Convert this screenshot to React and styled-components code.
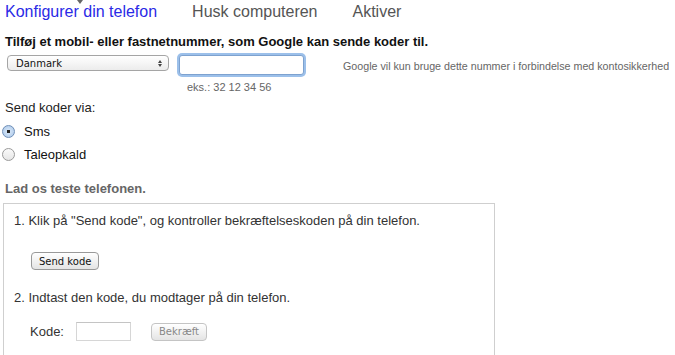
import React from "react";
import styled, { createGlobalStyle } from "styled-components";

const Global = createGlobalStyle`
  html, body {
    margin: 0;
    background: #fff;
    overflow: hidden;
  }
  body {
    font-family: "Liberation Sans", Arial, sans-serif;
    color: #222;
  }
`;

const Page = styled.div`
  padding: 0 5px;
  width: 675px;
  height: 355px;
  box-sizing: border-box;
  overflow: hidden;
`;

const Tabs = styled.div`
  position: relative;
  display: flex;
  gap: 35px;
  height: 24px;
  align-items: center;
  font-size: 16px;
`;

const Tab = styled.span`
  color: ${(p) => (p.$active ? "#2a2ae6" : "#555")};
  white-space: nowrap;
`;

const Pointer = styled.span`
  position: absolute;
  left: 72px;
  top: 0;
  width: 0;
  height: 0;
  border-left: 3px solid transparent;
  border-right: 3px solid transparent;
  border-top: 4px solid #666;
`;

const Heading = styled.div`
  margin-top: 10px;
  font-size: 13px;
  font-weight: bold;
  color: #111;
  white-space: nowrap;
`;

const PhoneRow = styled.div`
  display: flex;
  align-items: flex-start;
  margin-top: 6px;
  white-space: nowrap;
`;

const Select = styled.div`
  flex-shrink: 0;
  margin-left: 2px;
  width: 162px;
  height: 16px;
  box-sizing: border-box;
  border: 1px solid #a5a5a5;
  border-radius: 4px;
  background: linear-gradient(#fff, #ececec);
  display: flex;
  align-items: center;
  justify-content: space-between;
  padding: 0 6px 0 8px;
  font-family: "DejaVu Sans", sans-serif;
  font-size: 10px;
  color: #111;
`;

const Arrows = styled.span`
  display: flex;
  flex-direction: column;
  gap: 1px;
`;

const Tri = styled.span`
  width: 0;
  height: 0;
  border-left: 2px solid transparent;
  border-right: 2px solid transparent;
  ${(p) => (p.$up ? "border-bottom: 3px solid #444;" : "border-top: 3px solid #444;")}
`;

const NumberCol = styled.div`
  flex-shrink: 0;
  margin-left: 10px;
  display: flex;
  flex-direction: column;
`;

const NumberInput = styled.div`
  width: 125px;
  height: 20px;
  box-sizing: border-box;
  border: 1px solid #7ea2cf;
  border-radius: 3px;
  box-shadow: 0 0 0 2px #9cc0ea;
  background: #fff;
`;

const Example = styled.div`
  margin: 6px 0 0 8px;
  font-size: 11px;
  color: #666;
`;

const Note = styled.div`
  flex-shrink: 0;
  margin: 5px 0 0 39px;
  font-size: 10.7px;
  color: #666;
`;

const Label = styled.div`
  margin-top: 7px;
  font-size: 13px;
  color: #222;
`;

const RadioRow = styled.label`
  display: flex;
  align-items: center;
  gap: 9px;
  margin-top: ${(p) => p.$top}px;
  margin-left: -3px;
  font-size: 13px;
  color: #111;
`;

const Radio = styled.span`
  width: 13px;
  height: 13px;
  box-sizing: border-box;
  border-radius: 50%;
  border: 1px solid ${(p) => (p.$on ? "#6f8fb8" : "#9a9a9a")};
  background: ${(p) =>
    p.$on ? "radial-gradient(circle, #222 0 1.6px, #cfe1f5 2px, #a9c6e8)" : "linear-gradient(#fafafa, #e6e6e6)"};
`;

const SubHeading = styled.div`
  margin-top: 19px;
  font-size: 13px;
  font-weight: bold;
  color: #666;
`;

const Box = styled.div`
  margin: 7px 0 0 -2px;
  width: 492px;
  height: 170px;
  box-sizing: border-box;
  border: 1px solid #cfcfcf;
  padding: 9px 10px;
`;

const Step = styled.div`
  font-size: 13px;
  color: #333;
  margin-top: ${(p) => p.$top || 0}px;
`;

const Button = styled.button`
  display: block;
  font-family: "DejaVu Sans", sans-serif;
  font-size: 10px;
  padding: 0 7px;
  height: 18px;
  border: 1px solid ${(p) => (p.disabled ? "#c4c4c4" : "#999")};
  border-radius: 4px;
  background: linear-gradient(#fff, #e4e4e4);
  color: ${(p) => (p.disabled ? "#888" : "#111")};
`;

const SendWrap = styled.div`
  margin: 24px 0 0 17px;
`;

const CodeRow = styled.div`
  display: flex;
  align-items: center;
  margin: 17px 0 0 16px;
  font-size: 13px;
  color: #333;
`;

const CodeInput = styled.div`
  margin-left: 12px;
  width: 55px;
  height: 19px;
  box-sizing: border-box;
  border: 1px solid #d6d6d6;
  border-top-color: #c4c4c4;
`;

const ConfirmWrap = styled.div`
  margin-left: 20px;
`;

export default function App() {
  return (
    <Page>
      <Global />
      <Tabs>
        <Pointer />
        <Tab $active>Konfigurer din telefon</Tab>
        <Tab>Husk computeren</Tab>
        <Tab>Aktiver</Tab>
      </Tabs>
      <Heading>Tilføj et mobil- eller fastnetnummer, som Google kan sende koder til.</Heading>
      <PhoneRow>
        <Select>
          Danmark
          <Arrows>
            <Tri $up />
            <Tri />
          </Arrows>
        </Select>
        <NumberCol>
          <NumberInput />
          <Example>eks.: 32 12 34 56</Example>
        </NumberCol>
        <Note>Google vil kun bruge dette nummer i forbindelse med kontosikkerhed</Note>
      </PhoneRow>
      <Label>Send koder via:</Label>
      <RadioRow $top={9}>
        <Radio $on />
        Sms
      </RadioRow>
      <RadioRow $top={8}>
        <Radio />
        Taleopkald
      </RadioRow>
      <SubHeading>Lad os teste telefonen.</SubHeading>
      <Box>
        <Step>1. Klik på "Send kode", og kontroller bekræftelseskoden på din telefon.</Step>
        <SendWrap>
          <Button>Send kode</Button>
        </SendWrap>
        <Step $top={20}>2. Indtast den kode, du modtager på din telefon.</Step>
        <CodeRow>
          Kode:
          <CodeInput />
          <ConfirmWrap>
            <Button disabled>Bekræft</Button>
          </ConfirmWrap>
        </CodeRow>
      </Box>
    </Page>
  );
}
